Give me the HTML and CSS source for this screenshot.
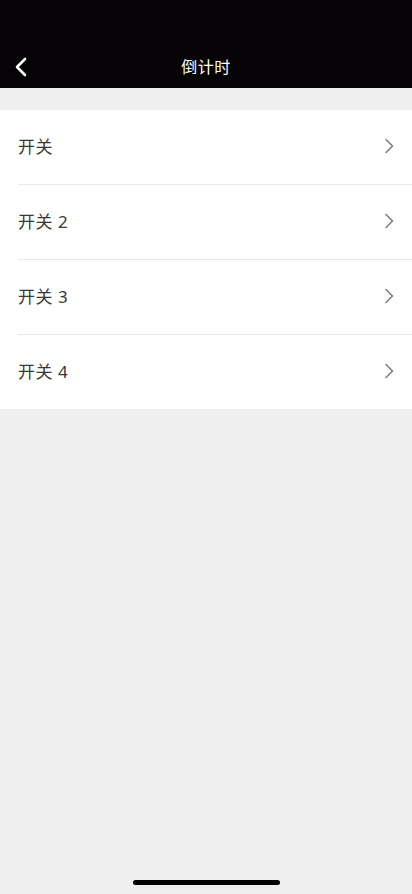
FILE: index.html
```html
<!DOCTYPE html>
<html lang="zh">
<head>
<meta charset="utf-8">
<meta name="viewport" content="width=device-width, initial-scale=1">
<link rel="stylesheet" href="styles.css">
</head>
<body>
<div class="screen">
  <header class="navbar">
    <div class="status"></div>
    <div class="bar">
      <svg class="back" width="14" height="20" viewBox="0 0 14 20"><path d="M11 2 L3 10 L11 18" fill="none" stroke="#fff" stroke-width="2.6" stroke-linecap="round" stroke-linejoin="round"/></svg>
      <h1 class="title">倒计时</h1>
    </div>
  </header>
  <ul class="list">
    <li class="row"><span class="label">开关</span><svg class="chev" width="10" height="16" viewBox="0 0 10 16"><path d="M2 1.5 L8.5 8 L2 14.5" fill="none" stroke="#7a7a7a" stroke-width="1.5" stroke-linecap="round" stroke-linejoin="round"/></svg></li>
    <li class="row"><span class="label">开关 2</span><svg class="chev" width="10" height="16" viewBox="0 0 10 16"><path d="M2 1.5 L8.5 8 L2 14.5" fill="none" stroke="#7a7a7a" stroke-width="1.5" stroke-linecap="round" stroke-linejoin="round"/></svg></li>
    <li class="row"><span class="label">开关 3</span><svg class="chev" width="10" height="16" viewBox="0 0 10 16"><path d="M2 1.5 L8.5 8 L2 14.5" fill="none" stroke="#7a7a7a" stroke-width="1.5" stroke-linecap="round" stroke-linejoin="round"/></svg></li>
    <li class="row"><span class="label">开关 4</span><svg class="chev" width="10" height="16" viewBox="0 0 10 16"><path d="M2 1.5 L8.5 8 L2 14.5" fill="none" stroke="#7a7a7a" stroke-width="1.5" stroke-linecap="round" stroke-linejoin="round"/></svg></li>
  </ul>
  <div class="home-indicator"></div>
</div>
</body>
</html>
```
FILE: styles.css
```css
* { box-sizing: border-box; }
html, body { margin: 0; padding: 0; }
body {
  background: #efefef;
  font-family: "Noto Sans", "Noto Sans CJK SC", sans-serif;
}
.screen {
  position: relative;
  width: 412px;
  height: 894px;
  background: #efefef;
  overflow: hidden;
}
.navbar {
  background: #050305;
  height: 88px;
  display: flex;
  flex-direction: column;
}
.status { height: 44px; }
.bar {
  position: relative;
  height: 44px;
  display: flex;
  align-items: center;
  justify-content: center;
}
.back {
  position: absolute;
  left: 14px;
  top: 13px;
}
.title {
  margin: 0;
  color: #fff;
  font-size: 16px;
  font-weight: 400;
  letter-spacing: 0.5px;
}
.list {
  list-style: none;
  margin: 22px 0 0;
  padding: 0 0 0 18px;
  background: #fff;
}
.row {
  height: 75px;
  display: flex;
  align-items: center;
  justify-content: space-between;
  padding-right: 18px;
  padding-bottom: 3px;
  border-bottom: 1px solid #e9e9e9;
}
.row:last-child { border-bottom: none; height: 74px; }
.label {
  font-size: 17px;
  color: #383838;
  letter-spacing: 0.5px;
}
.home-indicator {
  position: absolute;
  left: 133px;
  bottom: 9px;
  width: 147px;
  height: 5px;
  border-radius: 3px;
  background: #000;
}
```
